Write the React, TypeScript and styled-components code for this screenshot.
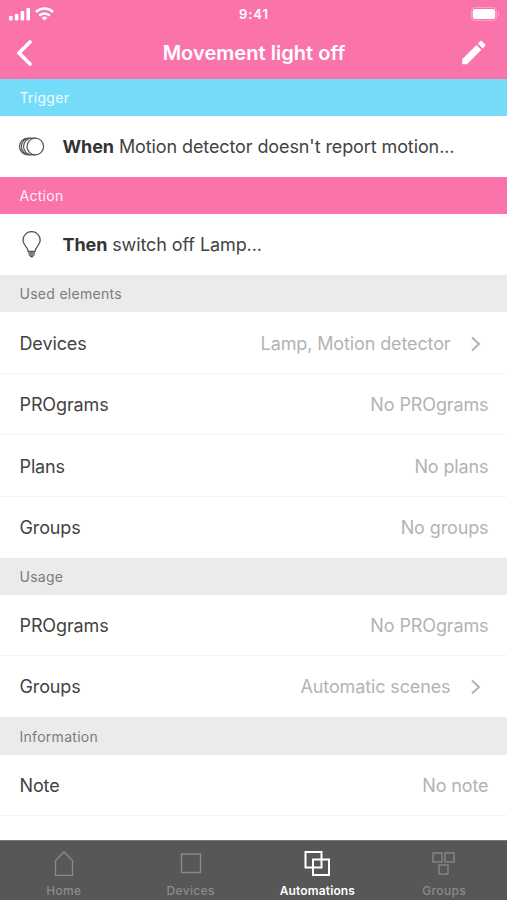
import React from "react";
import styled, { createGlobalStyle } from "styled-components";

const GlobalStyle = createGlobalStyle`
  * { box-sizing: border-box; }
  body { margin: 0; background: #fff; font-family: Inter, "Liberation Sans", sans-serif; }
`;

const Screen = styled.div`
  width: 507px;
  height: 900px;
  display: flex;
  flex-direction: column;
  overflow: hidden;
  background: #fff;
  color: #434343;
`;

const Header = styled.header`
  flex: none;
  height: 79px;
  background: #fb73ab;
  color: #fff;
`;

const StatusBar = styled.div`
  height: 27px;
  display: grid;
  grid-template-columns: 1fr auto 1fr;
  align-items: center;
  padding: 0 7px 0 8px;
`;

const Signals = styled.div`
  display: flex;
  align-items: center;
  gap: 4px;
`;

const Clock = styled.time`
  font-size: 13px;
  font-weight: 600;
  letter-spacing: 0.9px;
`;

const BatterySlot = styled.div`
  display: flex;
  justify-content: flex-end;
`;

const NavBar = styled.nav`
  height: 52px;
  display: grid;
  grid-template-columns: 40px 1fr 40px;
  align-items: center;
  padding: 0 16px 1px 17px;
`;

const IconButton = styled.button<{ $end?: boolean }>`
  display: flex;
  justify-content: ${(p) => (p.$end ? "flex-end" : "flex-start")};
  padding: 0;
  border: 0;
  background: none;
  color: inherit;
`;

const Title = styled.h1`
  margin: 0;
  text-align: center;
  font-size: 20px;
  font-weight: 600;
  letter-spacing: 0.05px;
`;

const Content = styled.main`
  flex: 1;
  min-height: 0;
  overflow: hidden;
`;

const tones = {
  blue: ["#74dbf8", "#effcff"],
  pink: ["#fb73ab", "#fff0f7"],
  gray: ["#ebebeb", "#7c7c7c"],
};

const SectionTitle = styled.h2<{ $tone: keyof typeof tones; $height?: number }>`
  display: flex;
  align-items: center;
  height: ${(p) => p.$height ?? 37}px;
  margin: 0;
  padding: 0 19.5px;
  background: ${(p) => tones[p.$tone][0]};
  color: ${(p) => tones[p.$tone][1]};
  font-size: 14px;
  font-weight: 400;
  line-height: 17px;
  letter-spacing: 0.28px;
`;

const Rule = styled.div`
  display: flex;
  align-items: center;
  height: 61px;
  padding: 1px 0 0 18px;
  font-size: 18px;
  line-height: 22px;
  letter-spacing: -0.1px;
`;

const RuleIcon = styled.span`
  display: flex;
  width: 44.5px;
`;

const Strong = styled.strong`
  font-weight: 700;
  color: #333;
`;

const Row = styled.div<{ $height?: number; $last?: boolean }>`
  display: flex;
  align-items: center;
  justify-content: space-between;
  height: ${(p) => p.$height ?? 61}px;
  padding: ${(p) => (p.$last ? 1 : 2)}px 18.5px 0 19.5px;
  border-bottom: ${(p) => (p.$last ? "0" : "1px solid #f4f4f4")};
  font-size: 18px;
  line-height: 22px;
  letter-spacing: -0.12px;
`;

const Value = styled.span`
  display: flex;
  align-items: center;
  color: #b3b3b3;
`;

const Chevron = styled.svg`
  margin: 0 8px 0 19px;
`;

const TabBar = styled.footer`
  flex: none;
  height: 60px;
  display: grid;
  grid-template-columns: repeat(4, 1fr);
  background: #575757;
  border-top: 1px solid #777;
`;

const Tab = styled.div<{ $active?: boolean }>`
  display: flex;
  flex-direction: column;
  align-items: center;
  padding: 8px 0 0 1px;
  color: ${(p) => (p.$active ? "#fff" : "#8b8b8b")};
  font-size: 12px;
  font-weight: ${(p) => (p.$active ? 600 : 500)};
  line-height: 15px;
  letter-spacing: ${(p) => (p.$active ? 0.15 : 0.35)}px;
`;

const TabIcon = styled.svg`
  display: block;
  margin-bottom: 6px;
  fill: none;
  stroke: currentColor;
`;

function MoreChevron() {
  return (
    <Chevron width="11" height="16" viewBox="0 0 11 16" fill="none" stroke="#b3b3b3" strokeWidth="2">
      <path d="M2 1.500l7 6.500-7 6.500" />
    </Chevron>
  );
}

function DetailRow({ label, value, more, height, last }: { label: string; value: string; more?: boolean; height?: number; last?: boolean }) {
  return (
    <Row $height={height} $last={last}>
      <span>{label}</span>
      <Value>{value}{more && <MoreChevron />}</Value>
    </Row>
  );
}

export default function App() {
  return (
    <Screen>
      <GlobalStyle />
      <Header>
        <StatusBar>
          <Signals>
            <svg width="23" height="14" viewBox="0 0 23 14" fill="#fff">
              <rect x="1" y="9" width="3.6" height="4.5" rx="1" />
              <rect x="6.8" y="7" width="3.6" height="6.5" rx="1" />
              <rect x="12.6" y="4" width="3.6" height="9.5" rx="1" />
              <rect x="18.4" y="1" width="3.6" height="12.5" rx="1" />
            </svg>
            <svg width="19" height="14" viewBox="0 0 19 14" fill="none" stroke="#fff" strokeWidth="2.6">
              <path d="M1 5a12.2 12.2 0 0 1 17 0M4.2 8.6a7.6 7.6 0 0 1 10.6 0" />
              <path d="M9.5 13.6L6.6 10.8a4.2 4.2 0 0 1 5.8 0z" fill="#fff" stroke="none" />
            </svg>
          </Signals>
          <Clock>9:41</Clock>
          <BatterySlot>
            <svg width="29" height="14" viewBox="0 0 29 14">
              <rect x=".5" y=".5" width="25" height="13" rx="3.5" fill="none" stroke="#fff" strokeOpacity=".3" />
              <rect x="1.800" y="2" width="22.400" height="10" rx="2.2" fill="#fff" />
              <path d="M27 4.8q2 2.2 0 4.4z" fill="#fff" fillOpacity=".45" />
            </svg>
          </BatterySlot>
        </StatusBar>
        <NavBar>
          <IconButton aria-label="Back">
            <svg width="18" height="28" viewBox="0 0 18 28" fill="none" stroke="#fff" strokeWidth="3.6" strokeLinecap="round">
              <path d="M13 3L2 14l11 11" />
            </svg>
          </IconButton>
          <Title>Movement light off</Title>
          <IconButton $end aria-label="Edit">
            <svg width="31" height="31" viewBox="0 0 24 24" fill="#fff">
              <path transform="translate(-1.300 0)" d="M3 17.250V21h3.750L17.810 9.940l-3.750-3.750L3 17.250zM20.710 7.040a1 1 0 0 0 0-1.410l-2.340-2.340a1 1 0 0 0-1.410 0l-1.830 1.830 3.750 3.750 1.830-1.830z" />
            </svg>
          </IconButton>
        </NavBar>
      </Header>
      <Content>
        <SectionTitle $tone="blue">Trigger</SectionTitle>
        <Rule>
          <RuleIcon>
            <svg width="27" height="20" viewBox="0 0 27 20" fill="none" stroke="#555" strokeWidth="1.200">
              <circle cx="17.300" cy="9.500" r="8.300" />
              <path d="M17.300 1.200h-3.500a8.300 8.300 0 0 0 0 16.600h3.500M14 1.200h-2.400a8.300 8.300 0 0 0 0 16.600H14M12 1.200h-2.200a8.300 8.300 0 0 0 0 16.600H12" />
            </svg>
          </RuleIcon>
          <span><Strong>When</Strong> Motion detector doesn't report motion...</span>
        </Rule>
        <SectionTitle $tone="pink">Action</SectionTitle>
        <Rule>
          <RuleIcon>
            <svg width="27" height="28" viewBox="0 0 27 28" fill="none" stroke="#555" strokeWidth="1.300">
              <path d="M10.200 20.500c0-4.500-5.200-6-5.200-11.300a8.600 8.600 0 0 1 17.200 0c0 5.300-5.200 6.800-5.200 11.300zM10.200 22.200h6.800M10.700 24h5.800M12 25.700h3.200" />
            </svg>
          </RuleIcon>
          <span><Strong>Then</Strong> switch off Lamp...</span>
        </Rule>
        <SectionTitle $tone="gray">Used elements</SectionTitle>
        <DetailRow label="Devices" value="Lamp, Motion detector" more height={62} />
        <DetailRow label="PROgrams" value="No PROgrams" />
        <DetailRow label="Plans" value="No plans" height={62} />
        <DetailRow label="Groups" value="No groups" last />
        <SectionTitle $tone="gray">Usage</SectionTitle>
        <DetailRow label="PROgrams" value="No PROgrams" />
        <DetailRow label="Groups" value="Automatic scenes" more last />
        <SectionTitle $tone="gray" $height={38}>Information</SectionTitle>
        <DetailRow label="Note" value="No note" />
      </Content>
      <TabBar>
        <Tab>
          <TabIcon width="28" height="28" viewBox="0 0 28 28" strokeWidth="1.300">
            <path d="M5.500 11.500L14 3l8.500 8.500V26.300h-17z" />
          </TabIcon>
          Home
        </Tab>
        <Tab>
          <TabIcon width="28" height="28" viewBox="0 0 28 28" strokeWidth="1.400">
            <rect x="4.500" y="5" width="19" height="18.500" />
          </TabIcon>
          Devices
        </Tab>
        <Tab $active>
          <TabIcon width="28" height="28" viewBox="0 0 28 28" strokeWidth="2">
            <rect x="2.500" y="3" width="16" height="15.500" />
            <rect x="10" y="10.500" width="16" height="15.500" />
          </TabIcon>
          Automations
        </Tab>
        <Tab>
          <TabIcon width="28" height="28" viewBox="0 0 28 28" strokeWidth="1.300">
            <rect x="3" y="4" width="9" height="9" />
            <rect x="15" y="4" width="9" height="9" />
            <rect x="9" y="16" width="9" height="9" />
          </TabIcon>
          Groups
        </Tab>
      </TabBar>
    </Screen>
  );
}
